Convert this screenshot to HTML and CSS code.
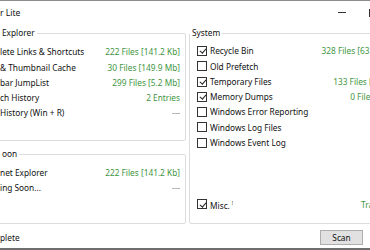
FILE: index.html
```html
<!DOCTYPE html>
<html lang="en">
<head>
    <meta charset="UTF-8">
    <title>Cleaner Lite</title>
    <link rel="stylesheet" href="styles.css">
</head>
<body>

<div class="window">
    <header class="titlebar">
        <span class="title">r Lite</span>
        <div class="controls">
            <span class="btn-min"></span>
            <span class="btn-max"></span>
        </div>
    </header>

    <main class="panels">
        <div class="col-left">
            <fieldset class="group group-explorer">
                <legend>Explorer</legend>
                <div class="row"><span>lete Links &amp; Shortcuts</span><span class="val">222 Files [141.2 Kb]</span></div>
                <div class="row"><span>&amp; Thumbnail Cache</span><span class="val">30 Files [149.9 Mb]</span></div>
                <div class="row"><span>bar JumpList</span><span class="val">299 Files [5.2 Mb]</span></div>
                <div class="row"><span>ch History</span><span class="val">2 Entries</span></div>
                <div class="row"><span>History (Win + R)</span><span class="val none">---</span></div>
            </fieldset>

            <fieldset class="group group-soon">
                <legend>oon</legend>
                <div class="row"><span>net Explorer</span><span class="val">222 Files [141.2 Kb]</span></div>
                <div class="row"><span>ing Soon...</span><span class="val none">---</span></div>
            </fieldset>
        </div>

        <fieldset class="group group-system">
            <legend>System</legend>
            <div class="row"><span class="box on"></span><span>Recycle Bin</span><span class="val">328 Files [63.5 Mb]</span></div>
            <div class="row"><span class="box"></span><span>Old Prefetch</span></div>
            <div class="row"><span class="box on"></span><span>Temporary Files</span><span class="val">133 Files [7 Mb]</span></div>
            <div class="row"><span class="box on"></span><span>Memory Dumps</span><span class="val">0 Files [0 b]</span></div>
            <div class="row"><span class="box"></span><span>Windows Error Reporting</span></div>
            <div class="row"><span class="box"></span><span>Windows Log Files</span></div>
            <div class="row"><span class="box"></span><span>Windows Event Log</span></div>
            <div class="row misc"><span class="box on"></span><span>Misc.<sup>!</sup></span><span class="val">Tracking</span></div>
        </fieldset>
    </main>

    <footer class="statusbar">
        <span>plete</span>
        <button class="scan">Scan</button>
    </footer>
</div>

</body>
</html>
```

FILE: styles.css
```css
* {
    margin: 0;
    padding: 0;
    box-sizing: border-box;
}

body {
    font-family: 'Noto Sans', 'Segoe UI', sans-serif;
    font-size: 8.3px;
    color: #111;
    background: #fff;
    width: 370px;
    height: 250px;
    overflow: hidden;
}

.window {
    width: 370px;
    height: 250px;
    border-top: 1px solid #8c8c8c;
    border-bottom: 2px solid #6f6f6f;
    background: #fff;
    overflow: hidden;
    display: flex;
    flex-direction: column;
}

/* title bar */
.titlebar {
    height: 23px;
    display: flex;
    align-items: center;
    justify-content: space-between;
    flex-shrink: 0;
}

.title {
    font-size: 8.6px;
}

.controls {
    display: flex;
    align-items: center;
    gap: 23px;
    margin-right: -7px;
}

.btn-min {
    width: 8px;
    height: 1px;
    background: #333;
}

.btn-max {
    width: 8px;
    height: 8px;
    border: 1px solid #333;
}

/* group boxes */
.panels {
    display: grid;
    grid-template-columns: 196px 216px;
    column-gap: 3px;
    margin: 3px 0 0 -10px;
    height: 197px;
    flex-shrink: 0;
}

.col-left {
    display: flex;
    flex-direction: column;
    gap: 7px;
}

.group {
    border: 1px solid #dcdcdc;
    border-radius: 2px;
    min-width: 0;
}

.group legend {
    line-height: 12px;
    padding: 0 2px;
}

.row {
    display: flex;
    align-items: center;
    height: 15.3px;
    line-height: 15.3px;
    white-space: nowrap;
}

.val {
    margin-left: auto;
    color: #3f963f;
}

.val.none {
    color: #888;
}

.group-explorer,
.group-soon {
    padding: 0 5px 0 9px;
}

.group-explorer {
    padding-top: 5.3px;
    height: 114px;
}

.group-soon {
    padding-top: 5px;
    flex: 1;
}

.group-system {
    padding: 4.3px 10px 11px 7px;
    display: flex;
    flex-direction: column;
}

.group-system legend {
    margin-left: -7px;
}

.group-system .row .box + span {
    margin-left: 3px;
}

.misc {
    margin-top: auto;
}

.misc sup {
    font-size: 5px;
    margin-left: 2px;
    vertical-align: 4px;
}

/* checkbox */
.box {
    width: 10px;
    height: 10px;
    border: 1px solid #333;
    background: #fff;
    flex-shrink: 0;
    position: relative;
}

.box.on::after {
    content: "";
    position: absolute;
    left: 2.5px;
    top: 0.5px;
    width: 2.5px;
    height: 5px;
    border: solid #222;
    border-width: 0 1.4px 1.4px 0;
    transform: rotate(40deg);
}

/* bottom bar */
.statusbar {
    flex: 1;
    display: flex;
    align-items: center;
    justify-content: space-between;
    padding: 3px 7px 0 0;
}

.scan {
    font-family: inherit;
    font-size: 8.3px;
    width: 43px;
    height: 15px;
    background: #e1e1e1;
    border: 1px solid #adadad;
    color: #111;
}
```
